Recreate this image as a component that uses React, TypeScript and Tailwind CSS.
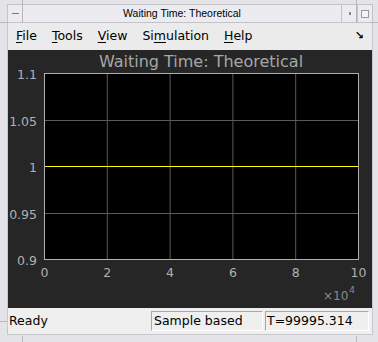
import React from "react";

const yTicks = [
  { label: "1.1", v: 1.1 },
  { label: "1.05", v: 1.05 },
  { label: "1", v: 1.0 },
  { label: "0.95", v: 0.95 },
  { label: "0.9", v: 0.9 },
];
const xTicks = [0, 2, 4, 6, 8, 10];

// plot box in panel coords
const L = 36;
const R = 350;
const T = 23;
const B = 209;
const yPos = (v: number) => T + ((1.1 - v) / 0.2) * (B - T);
const xPos = (v: number) => L + (v / 10) * (R - L);

function Plot() {
  return (
    <svg width="364" height="258" className="block">
      <rect x="0" y="0" width="364" height="258" fill="#262626" />
      <text x="193" y="17" fill="#a6a6a6" fontSize="16" textAnchor="middle" fontFamily="DejaVu Sans, sans-serif">
        Waiting Time: Theoretical
      </text>
      <rect x={L} y={T} width={R - L} height={B - T} fill="#000" />
      {xTicks.slice(1, -1).map((t) => (
        <line key={t} x1={xPos(t) + 0.5} x2={xPos(t) + 0.5} y1={T} y2={B} stroke="#5a5a5a" strokeWidth="1" />
      ))}
      {yTicks.slice(1, -1).map((t) => (
        <line key={t.label} x1={L} x2={R} y1={Math.round(yPos(t.v)) + 0.5} y2={Math.round(yPos(t.v)) + 0.5} stroke="#5a5a5a" strokeWidth="1" />
      ))}
      <line x1={L} x2={R} y1={Math.round(yPos(1)) + 0.5} y2={Math.round(yPos(1)) + 0.5} stroke="#ffff00" strokeWidth="1" />
      <rect x={L + 0.5} y={T + 0.5} width={R - L} height={B - T} fill="none" stroke="#b0b0b0" strokeWidth="1" />
      {yTicks.map((t) => (
        <text key={t.label} x="29" y={yPos(t.v) + 6} fill="#b0b0b0" fontSize="12.5" textAnchor="end" fontFamily="DejaVu Sans, sans-serif">
          {t.label}
        </text>
      ))}
      {xTicks.map((t) => (
        <text key={t} x={xPos(t) + 0.5} y="227" fill="#b0b0b0" fontSize="12.5" textAnchor="middle" fontFamily="DejaVu Sans, sans-serif">
          {t}
        </text>
      ))}
      <text x="315" y="250" fill="#8a8a8a" fontSize="12" fontFamily="DejaVu Sans, sans-serif">
        ×10
      </text>
      <text x="341" y="243" fill="#8a8a8a" fontSize="9.5" fontFamily="DejaVu Sans, sans-serif">
        4
      </text>
    </svg>
  );
}

function MenuItem({ first, rest }: { first: string; rest: string }) {
  return (
    <span>
      <span className="underline underline-offset-2">{first}</span>
      {rest}
    </span>
  );
}

export default function App() {
  return (
    <div className="relative w-[378px] h-[342px] bg-[#e4e4e8] overflow-hidden" style={{ fontFamily: "'DejaVu Sans', sans-serif" }}>
      {/* frame corner handles */}
      <div className="absolute left-[22px] top-0 h-[23px] w-px bg-[#b8b8bc]" />
      <div className="absolute left-0 top-[22px] h-px w-[8px] bg-[#b8b8bc]" />
      <div className="absolute left-[356px] top-0 h-[23px] w-px bg-[#b8b8bc]" />
      <div className="absolute right-0 top-[22px] h-px w-[8px] bg-[#b8b8bc]" />
      <div className="absolute left-[22px] bottom-0 h-[6px] w-px bg-[#b8b8bc]" />
      <div className="absolute left-0 top-[321px] h-px w-[7px] bg-[#b8b8bc]" />
      <div className="absolute left-[356px] bottom-0 h-[6px] w-px bg-[#b8b8bc]" />

      <div className="flex flex-col pl-[7px] pr-[5px] pt-[4px]">
        {/* title bar */}
        <div className="flex h-[19px] border border-[#c4c4c8] bg-[#ececf0]">
          <div className="flex w-[15px] items-center justify-center border-r border-[#c4c4c8]">
            <div className="h-px w-[7px] bg-[#7a7a7e]" />
          </div>
          <div
            className="flex flex-1 items-center justify-center text-[10.5px] text-black"
            style={{ fontFamily: "'Liberation Sans', sans-serif" }}
          >
            Waiting Time: Theoretical
          </div>
          <div className="flex w-[16px] items-center justify-center border-l border-[#c4c4c8]">
            <div className="h-[3px] w-[2px] bg-[#8a8a8e]" />
          </div>
          <div className="flex w-[15px] items-center justify-center border-l border-[#c4c4c8]">
            <div className="h-[8px] w-[8px] border border-[#9a9a9e] bg-[#f4f4f6]" />
          </div>
        </div>

        <div className="flex border-l border-r border-[#c8c8cc] pr-[2px] w-[366px]">
          <div className="flex flex-col w-[364px]">
            {/* menu bar */}
            <div className="flex h-[27px] items-center gap-[15px] pl-[8px] bg-[#ebebeb] text-[12.5px] text-black">
              <MenuItem first="F" rest="ile" />
              <MenuItem first="T" rest="ools" />
              <MenuItem first="V" rest="iew" />
              <span>
                Si<span className="underline underline-offset-2">m</span>ulation
              </span>
              <MenuItem first="H" rest="elp" />
              <span className="ml-auto mr-[8px] text-[11px] font-bold">↘</span>
            </div>

            <Plot />

            {/* status bar */}
            <div className="flex h-[26px] items-center bg-[#efefef] text-[12.5px] text-black">
              <div className="flex-1 pl-[1px]">Ready</div>
              <div className="flex h-[20px] w-[112px] items-center border-t border-l border-[#a8a8a8] border-b border-r border-b-white border-r-white pl-[2px]">
                Sample based
              </div>
              <div className="ml-[2px] mr-[3px] flex h-[20px] w-[104px] items-center border-t border-l border-[#a8a8a8] border-b border-r border-b-white border-r-white pl-[1px]">
                T=99995.314
              </div>
            </div>
          </div>
        </div>
        <div className="h-px w-[366px] bg-[#c8c8cc]" />
      </div>
    </div>
  );
}
